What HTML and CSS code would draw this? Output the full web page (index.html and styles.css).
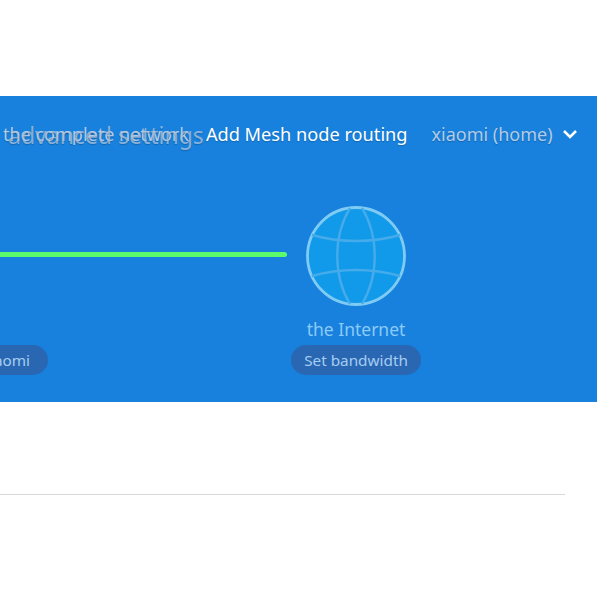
FILE: index.html
```html
<!DOCTYPE html>
<html lang="en">
<head>
    <meta charset="UTF-8">
    <meta name="viewport" content="width=device-width, initial-scale=1.0">
    <title>Router status</title>
    <link rel="stylesheet" href="styles.css">
</head>
<body>
    <div class="banner">
        <div class="nav">
            <span class="nav-item nav-ghost">advanced settings</span>
            <span class="nav-item">the complete network</span>
            <span class="nav-item active">Add Mesh node routing</span>
            <span class="nav-item router">xiaomi (home)
                <svg class="chevron" width="16" height="10" viewBox="0 0 16 10">
                    <path d="M2 2l6 6 6-6" fill="none" stroke="#fff" stroke-width="2.6"/>
                </svg>
            </span>
        </div>
        <div class="diagram">
            <div class="link-col">
                <div class="link"></div>
                <div class="pill pill-left">xiaomi</div>
            </div>
            <div class="node">
                <svg class="globe" width="100" height="100" viewBox="0 0 100 100">
                    <circle cx="50" cy="50" r="48.5" fill="#129aea" stroke="#7fcbf4" stroke-width="2.8"/>
                    <g fill="none" stroke="#45abea" stroke-width="2.4">
                        <path d="M44 2C27 30 27 70 44 98"/>
                        <path d="M56 2C73 30 73 70 56 98"/>
                        <path d="M6 29C34 37 66 37 94 29"/>
                        <path d="M6 70C34 62 66 62 94 70"/>
                    </g>
                </svg>
                <div class="node-name">the Internet</div>
                <div class="pill">Set bandwidth</div>
            </div>
        </div>
    </div>
    <div class="divider"></div>
</body>
</html>
```

FILE: styles.css
```css
body {
    margin: 0;
    padding-top: 96px;
    background-color: #fff;
    font-family: "Noto Sans", sans-serif;
}
.banner {
    position: relative;
    height: 306px;
    overflow: hidden;
    background-color: #1781dd;
}
.nav {
    display: flex;
    align-items: center;
    height: 76px;
    padding-left: 3px;
}
.nav-item {
    font-size: 18px;
    color: #b3cbe6;
    text-shadow: 0 1px 1px rgba(0,0,0,0.2);
    white-space: nowrap;
}
.nav-ghost {
    position: absolute;
    left: 8px;
    top: 23px;
    font-size: 23px;
    color: rgba(190,205,225,0.7);
}
.active {
    margin-left: 17px;
    font-size: 18.2px;
    color: #fff;
}
.router {
    display: flex;
    align-items: center;
    margin-left: 24px;
}
.chevron {
    margin-left: 9px;
}
.diagram {
    display: flex;
    padding-top: 34px;
}
.link-col {
    width: 291px;
}
.link {
    width: 287px;
    height: 5px;
    margin-top: 46px;
    border-radius: 0 3px 3px 0;
    background-color: #5cfb6c;
}
.node {
    display: flex;
    flex-direction: column;
    align-items: center;
    width: 130px;
}
.globe {
    display: block;
}
.node-name {
    margin-top: 11px;
    font-size: 17.5px;
    line-height: 24px;
    color: #8ccaf8;
}
.pill {
    height: 30px;
    margin-top: 4px;
    padding: 0 13px;
    border-radius: 15px;
    font-size: 15.3px;
    line-height: 30px;
    white-space: nowrap;
    color: #a5cdf1;
    background-color: #2967b3;
}
.pill-left {
    width: 55px;
    margin-top: 88px;
    margin-left: -38px;
    padding-right: 18px;
    text-align: right;
}
.divider {
    width: 565px;
    margin-top: 92px;
    border-top: 1px solid #d8d8d8;
}
```
